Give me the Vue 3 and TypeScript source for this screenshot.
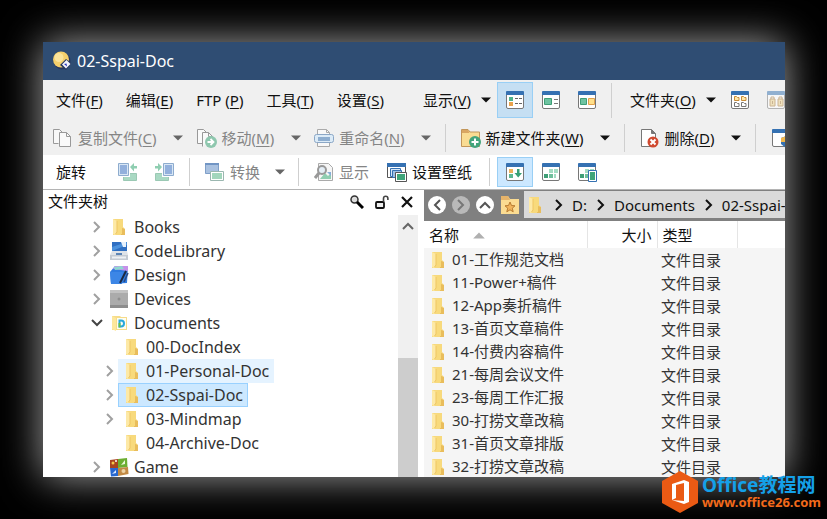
<script setup lang="ts">
interface Tool {
  kind: 'button' | 'caret' | 'sep'
  icon?: string
  text?: string
  hotkey?: string
  title?: string
  off?: boolean
}

interface TreeNode {
  name: string
  icon: string
  level: number
  arrow: 'closed' | 'open' | 'none'
  state?: 'hover' | 'selected'
}

const menus = [
  { text: '文件', hotkey: 'F' },
  { text: '编辑', hotkey: 'E' },
  { text: 'FTP ', hotkey: 'P' },
  { text: '工具', hotkey: 'T' },
  { text: '设置', hotkey: 'S' },
]

const fileTools: Tool[] = [
  { kind: 'button', icon: 'copy', text: '复制文件', hotkey: 'C', off: true },
  { kind: 'caret', title: '复制选项', off: true },
  { kind: 'button', icon: 'move', text: '移动', hotkey: 'M', off: true },
  { kind: 'caret', title: '移动选项', off: true },
  { kind: 'button', icon: 'rename', text: '重命名', hotkey: 'N', off: true },
  { kind: 'caret', title: '重命名选项', off: true },
  { kind: 'sep' },
  { kind: 'button', icon: 'new-folder', text: '新建文件夹', hotkey: 'W' },
  { kind: 'caret', title: '新建选项' },
  { kind: 'sep' },
  { kind: 'button', icon: 'delete', text: '删除', hotkey: 'D' },
  { kind: 'caret', title: '删除选项' },
  { kind: 'sep' },
  { kind: 'button', icon: 'admin', title: '管理员' },
]

const tree: TreeNode[] = [
  { name: 'Books', icon: 'folder', level: 0, arrow: 'closed' },
  { name: 'CodeLibrary', icon: 'code', level: 0, arrow: 'closed' },
  { name: 'Design', icon: 'design', level: 0, arrow: 'closed' },
  { name: 'Devices', icon: 'device', level: 0, arrow: 'closed' },
  { name: 'Documents', icon: 'docs', level: 0, arrow: 'open' },
  { name: '00-DocIndex', icon: 'folder', level: 1, arrow: 'none' },
  { name: '01-Personal-Doc', icon: 'folder', level: 1, arrow: 'closed', state: 'hover' },
  { name: '02-Sspai-Doc', icon: 'folder', level: 1, arrow: 'closed', state: 'selected' },
  { name: '03-Mindmap', icon: 'folder', level: 1, arrow: 'closed' },
  { name: '04-Archive-Doc', icon: 'folder', level: 1, arrow: 'none' },
  { name: 'Game', icon: 'game', level: 0, arrow: 'closed' },
]

const crumbs = ['D:', 'Documents', '02-Sspai-Doc']

const files = [
  '01-工作规范文档',
  '11-Power+稿件',
  '12-App奏折稿件',
  '13-首页文章稿件',
  '14-付费内容稿件',
  '21-每周会议文件',
  '23-每周工作汇报',
  '30-打捞文章改稿',
  '31-首页文章排版',
  '32-打捞文章改稿',
]
</script>

<template>
  <svg class="sprite" aria-hidden="true">
    <symbol id="caret" viewBox="0 0 10 6"><path d="M0 .5h10L5 5.500z" fill="currentColor" /></symbol>
    <symbol id="chevron" viewBox="0 0 10 12"><path d="M2 1l5 5-5 5" fill="none" stroke="currentColor" stroke-width="2" /></symbol>
    <symbol id="chevron-open" viewBox="0 0 12 10"><path d="M1 2l5 5 5-5" fill="none" stroke="currentColor" stroke-width="2" /></symbol>
    <symbol id="frame" viewBox="0 0 20 20">
      <rect x="1.500" y="1.500" width="17" height="17" rx="1.500" fill="#fff" stroke="#777" />
      <path d="M1 5V2a1 1 0 0 1 1-1h16a1 1 0 0 1 1 1v3z" fill="#3571b2" />
    </symbol>
    <symbol id="v-details" viewBox="0 0 20 20">
      <use href="#frame" width="20" height="20" />
      <path d="M4 7h4v4H4z" fill="#4fb38c" /><path d="M4 12h4v4H4z" fill="#e9a24c" />
      <path d="M10 8.500h3m1 0h3M10 13.500h3m1 0h3" stroke="#666" />
    </symbol>
    <symbol id="v-list" viewBox="0 0 20 20">
      <use href="#frame" width="20" height="20" />
      <path d="M3.500 8.500h7v6h-7z" fill="#6fc3a1" stroke="#3f9f77" /><path d="M13 9.500h4m-4 4h4" stroke="#777" />
    </symbol>
    <symbol id="v-dual" viewBox="0 0 20 20">
      <use href="#frame" width="20" height="20" />
      <path d="M3.500 8.500h6v6h-6z" fill="#6fc3a1" stroke="#3f9f77" /><path d="M11.500 8.500h6v6h-6z" fill="#ffe08a" stroke="#e0a04c" />
    </symbol>
    <symbol id="f-grid" viewBox="0 0 20 20">
      <use href="#frame" width="20" height="20" />
      <path d="M4.500 6.500h2l1 1h1.500v3H4.500zM11.500 6.500h2l1 1H16v3h-4.500z" fill="#ffe7a8" stroke="#c78b38" />
      <path d="M4.500 12.500h2l1 1h1.500v3H4.500zM11.500 12.500h2l1 1H16v3h-4.500z" fill="#fff" stroke="#777" />
    </symbol>
    <symbol id="f-lock" viewBox="0 0 20 20">
      <g opacity=".5">
        <use href="#frame" width="20" height="20" />
        <path d="M4 9h5v7H4zM12 9h5v7h-5z" fill="#efd38b" stroke="#a87a3a" /><path d="M5 9V7h3v2M13 9V7h3v2M6.500 11v3m8-3v3" fill="none" stroke="#a87a3a" />
      </g>
    </symbol>
    <symbol id="copy" viewBox="0 0 20 20">
      <path d="M5.500 15.500h-5v-14h6l3 3" fill="#f8f8f8" stroke="#999" />
      <path d="M6.500 4.500h7l4 4v10h-11z" fill="#fafafa" stroke="#999" /><path d="M13.500 4.500v4h4" fill="none" stroke="#999" />
    </symbol>
    <symbol id="move" viewBox="0 0 20 20">
      <path d="M5 15.500H.5v-14h6l3 3M5.500 18.500v-14h6l4 4v2" fill="#fafafa" stroke="#999" /><path d="M11.500 4.500v4h4" fill="none" stroke="#999" />
      <circle cx="14" cy="14" r="6" fill="#8ec7ae" /><path d="M10.500 14h6m-3-3l3 3-3 3" fill="none" stroke="#fff" stroke-width="1.800" />
    </symbol>
    <symbol id="rename" viewBox="0 0 20 20">
      <path d="M3.500 18.500v-17h9l3 3v14z" fill="#f8f8f8" stroke="#aaa" /><path d="M12.500 1.500v3h3" fill="none" stroke="#aaa" />
      <rect x=".5" y="6.500" width="19" height="8" rx="2" fill="#dcebf7" stroke="#8ba7c6" /><path d="M4 9h12v4H4z" fill="#8eaed0" />
    </symbol>
    <symbol id="new-folder" viewBox="0 0 20 20">
      <path d="M.5 18.500v-17H7l2 2.500h9.500v14.500z" fill="#f9dc93" stroke="#c2965a" /><path d="M1 2h6l1.500 3H1z" fill="#d9a662" />
      <circle cx="14" cy="14" r="6" fill="#43a47c" /><path d="M14 10.500v7M10.500 14h7" stroke="#fff" stroke-width="2" />
    </symbol>
    <symbol id="delete" viewBox="0 0 20 20">
      <path d="M1.500 18.500v-17h10l4 4v13z" fill="#fff" stroke="#777" /><path d="M11.500 1.500v4h4" fill="#777" stroke="#777" />
      <circle cx="13" cy="14" r="5.500" fill="#d0492f" /><path d="M10.500 11.500l5 5m0-5l-5 5" stroke="#fff" stroke-width="2" />
    </symbol>
    <symbol id="admin" viewBox="0 0 20 20">
      <use href="#frame" width="20" height="20" />
      <path d="M10 10l5-2 5 2v4l-5 6-5-4z" fill="#3571b2" /><path d="M15 8v6h-5v-4zM15 14h5l-5 6z" fill="#f0b64b" />
    </symbol>
    <symbol id="rot-l" viewBox="0 0 20 20">
      <path d="M5.500 11.500h13v7h-13z" fill="#a9d9c3" stroke="#9bc9b4" /><path d="M0 0h12v15H0z" fill="#fff" /><path d="M.5 1.500h10v12H.5z" fill="#d9e7f5" stroke="#8eacce" /><path d="M2 3h7v9H2z" fill="#92b0dc" />
      <path d="M12 5l4-4v3h3v2.500h-3v3z" fill="#8fceb1" />
    </symbol>
    <symbol id="rot-r" viewBox="0 0 20 20">
      <path d="M1.500 11.500h13v7h-13z" fill="#a9d9c3" stroke="#9bc9b4" /><path d="M8 0h12v15H8z" fill="#fff" /><path d="M9.500 1.500h10v12h-10z" fill="#d9e7f5" stroke="#8eacce" /><path d="M11 3h7v9h-7z" fill="#92b0dc" />
      <path d="M8 5L4 1v3H1v2.500h3v3z" fill="#8fceb1" />
    </symbol>
    <symbol id="convert" viewBox="0 0 20 20">
      <path d="M.5 1.500h13v10H.5z" fill="#a9c1e0" stroke="#7f9fc8" /><path d="M0 1h14v2H0z" fill="#7195c4" />
      <path d="M5.500 9.500h13v9h-13z" fill="#fff" stroke="#9bb7b0" /><path d="M7 11h10v6H7z" fill="#a2d6bc" />
    </symbol>
    <symbol id="preview" viewBox="0 0 20 20">
      <path d="M4.500 18.500v-17h10l4 4v13z" fill="#f6f6f6" stroke="#aaa" /><path d="M6 17l5-6 3 3 3-3v6z" fill="#8fceb1" /><path d="M13 10h4v4z" fill="#87add8" />
      <circle cx="8" cy="8" r="4" fill="#e4eef6" stroke="#999" stroke-width="2" /><path d="M5 11l-4 5" stroke="#999" stroke-width="3" />
    </symbol>
    <symbol id="wallpaper" viewBox="0 0 20 20">
      <path d="M.5 1.500h18v14H.5z" fill="#fff" stroke="#555" /><path d="M0 1h19v4H0z" fill="#3571b2" />
      <path d="M3.500 6.500h10v8h-10z" fill="#d7e8f8" stroke="#3571b2" /><path d="M5.500 8.500h9v7h-9z" fill="#9dc1e6" stroke="#3571b2" />
      <path d="M8.500 10.500h11v9h-11z" fill="#fff" stroke="#555" /><path d="M10 12h8v6h-8z" fill="#3fa57a" />
    </symbol>
    <symbol id="s-down" viewBox="0 0 20 20">
      <use href="#frame" width="20" height="20" />
      <path d="M4 7h4v4H4z" fill="#efb25a" /><path d="M4 12h4v4H4z" fill="#5cb892" />
      <path d="M12 7h2.500v4H17l-3.800 4.500L9.500 11H12z" fill="#38a076" />
    </symbol>
    <symbol id="cells" viewBox="0 0 20 20">
      <use href="#frame" width="20" height="20" />
      <path d="M8 7h4v4H8zM13 7h4v4h-4z" fill="#a4dcc3" /><path d="M3 12h4v4H3z" fill="#3f9f77" /><path d="M8 12h4v4H8z" fill="#6fbf9c" /><path d="M13 12h2v4h-2z" fill="#a4dcc3" />
    </symbol>
    <symbol id="cells-sel" viewBox="0 0 20 20">
      <use href="#cells" width="20" height="20" />
      <path d="M11.500 8.500h8v11h-8z" fill="#fff" stroke="#3571b2" /><path d="M13 10h5v8h-5z" fill="#3fa57a" />
    </symbol>
    <symbol id="folder" viewBox="0 0 20 20">
      <path d="M4 2h10v8l2 2v6H4z" fill="#f7d97d" /><path d="M13 11l3 1v6h-4z" fill="#e9bd5c" /><path d="M8 3h5v14H8z" fill="#f8da7c" /><path d="M4 2l4 2v11l-2 3-2-1z" fill="#fde9a6" /><path d="M8 4v11l-1.500 2" fill="none" stroke="#eec563" />
    </symbol>
    <symbol id="docs" viewBox="0 0 20 20">
      <path d="M3 3h8l1 1h6v13H3z" fill="#f6dc8a" /><path d="M8 5h9v11H8z" fill="#fffdf0" /><path d="M3 3l4 2v13l-4-2z" fill="#fde79c" />
      <path d="M10.500 7.500H12a3 3 0 0 1 0 6h-1.500z" fill="none" stroke="#29a9dc" stroke-width="2" /><path d="M10.500 10v4.500" stroke="#6cc04a" stroke-width="2" />
    </symbol>
    <symbol id="code" viewBox="0 0 20 20">
      <path d="M3 1h15v11H3z" fill="#2f6fc2" /><path d="M3 6L18 1v3L3 10z" fill="#4c92dd" /><path d="M12 1h5v5h-3z" fill="#e7f2fd" /><path d="M1 14l2-4h15l1 4v5H1z" fill="#dfe3e8" /><path d="M1 14h18v5H1z" fill="#c4cad2" /><path d="M7 12h6v2H7z" fill="#5c84b5" />
      <path d="M3 16.500h14" stroke="#eef1f4" stroke-width="2" />
    </symbol>
    <symbol id="design" viewBox="0 0 20 20">
      <path d="M1 7L6 1h13l-1 17-16 1z" fill="#2f7be0" /><path d="M4 4l2-3h13v5z" fill="#c690ea" /><path d="M5 2l8-1 2 3-9 1z" fill="#8fd8d0" /><path d="M1 7h13l-1 12H2z" fill="#3c86e6" />
      <path d="M17 6l-6 12" stroke="#1c2940" stroke-width="2" /><path d="M19 8l-4 9" stroke="#2b4a80" stroke-width="1.500" />
    </symbol>
    <symbol id="device" viewBox="0 0 20 20">
      <rect x="1" y="1" width="18" height="18" fill="#ababab" /><path d="M1 1h18v3H1z" fill="#c2c2c2" /><path d="M1 16h18v3H1z" fill="#8d8d8d" /><circle cx="10" cy="10" r="1.500" fill="#8f8f8f" />
    </symbol>
    <symbol id="game" viewBox="0 0 20 20">
      <path d="M1 3l8-1v9H1z" fill="#a8431f" /><path d="M9 2l9-1 .5 9-9.500 1z" fill="#6cae32" /><path d="M1 11h8v8l-7 .5z" fill="#2868d0" /><path d="M9 11l10-1 .5 7-10.500 2z" fill="#c28a45" />
      <circle cx="4" cy="6" r="1.500" fill="#f2c74a" /><circle cx="7" cy="4" r="1" fill="#fff" /><path d="M12 8l4-5v4z" fill="#eaf7d8" /><path d="M3 17l4-4v3z" fill="#dfeaff" /><circle cx="14.500" cy="14" r="2" fill="#ecd2a4" />
    </symbol>
    <symbol id="fav" viewBox="0 0 20 20">
      <path d="M1 19V1h7l2 3h9v15z" fill="#fbdc92" /><path d="M1 1h7l2 4H1z" fill="#e5b36a" /><path d="M10 7l1.500 3.500 3.500.3-2.700 2.400.9 3.600-3.200-2-3.200 2 .9-3.600L5 10.800l3.500-.3z" fill="#f0b45c" stroke="#b87b30" />
    </symbol>
    <symbol id="search" viewBox="0 0 14 14">
      <circle cx="4.500" cy="4.500" r="3.500" fill="#ddd" stroke="#333" stroke-width="1.500" /><path d="M7 7l6 6" stroke="#000" stroke-width="3" />
    </symbol>
    <symbol id="unlock" viewBox="0 0 14 14">
      <rect x="1" y="7" width="8" height="6" rx="1" fill="#eee" stroke="#111" stroke-width="1.800" /><path d="M8.500 7V3.500a2.200 2.200 0 0 1 4.400 0V5" fill="none" stroke="#444" stroke-width="1.600" />
    </symbol>
    <symbol id="close" viewBox="0 0 14 14"><path d="M2 2l10 10M12 2L2 12" stroke="#111" stroke-width="2.200" /></symbol>
    <symbol id="moon" viewBox="0 0 20 20">
      <circle cx="10" cy="10" r="8.500" fill="#26365f" />
      <circle cx="9" cy="8.500" r="8" fill="#f5d06c" /><circle cx="7" cy="6.500" r="4.500" fill="#fbe49b" />
      <path d="M8 14l6-6 4 3 1 2-5 6z" fill="#26365f" />
      <path d="M10 13.500l4.500-4.500 4 4-4.500 4.500z" fill="#f4f4fb" /><path d="M12 13l2.500-.5.5 3z" fill="#2a36b8" />
    </symbol>
  </svg>

  <div class="desktop">
    <main class="window">
      <header class="titlebar">
        <svg class="app-icon"><use href="#moon" /></svg>
        <h1>02-Sspai-Doc</h1>
      </header>

      <nav class="row menubar" aria-label="菜单">
        <div class="menus">
          <button v-for="m in menus" :key="m.hotkey" type="button">{{ m.text }}(<u>{{ m.hotkey }}</u>)</button>
        </div>
        <button type="button" class="view">显示(<u>V</u>)</button>
        <button type="button" class="caret narrow" aria-label="显示选项"><svg><use href="#caret" /></svg></button>
        <button type="button" class="square active" aria-label="详细信息"><svg class="icon"><use href="#v-details" /></svg></button>
        <button type="button" class="square" aria-label="列表"><svg class="icon"><use href="#v-list" /></svg></button>
        <button type="button" class="square" aria-label="双栏"><svg class="icon"><use href="#v-dual" /></svg></button>
        <span class="sep tight"></span>
        <button type="button">文件夹(<u>O</u>)</button>
        <button type="button" class="caret narrow" aria-label="文件夹选项"><svg><use href="#caret" /></svg></button>
        <button type="button" class="square" aria-label="文件夹格式"><svg class="icon"><use href="#f-grid" /></svg></button>
        <button type="button" class="square" aria-label="锁定格式"><svg class="icon"><use href="#f-lock" /></svg></button>
      </nav>

      <div class="row filebar">
        <template v-for="(t, i) in fileTools" :key="i">
          <span v-if="t.kind === 'sep'" class="sep"></span>
          <button v-else-if="t.kind === 'caret'" type="button" class="caret" :class="{ off: t.off }" :aria-label="t.title">
            <svg><use href="#caret" /></svg>
          </button>
          <button v-else type="button" class="tool" :class="{ off: t.off }" :aria-label="t.title">
            <svg class="icon"><use :href="'#' + t.icon" /></svg>
            <span v-if="t.text">{{ t.text }}(<u>{{ t.hotkey }}</u>)</span>
          </button>
        </template>
      </div>

      <div class="row imagebar">
        <span class="caption">旋转</span>
        <button type="button" class="square" aria-label="向左旋转"><svg class="icon"><use href="#rot-l" /></svg></button>
        <button type="button" class="square" aria-label="向右旋转"><svg class="icon"><use href="#rot-r" /></svg></button>
        <span class="sep"></span>
        <button type="button" class="tool off"><svg class="icon"><use href="#convert" /></svg><span>转换</span></button>
        <button type="button" class="caret off" aria-label="转换选项"><svg><use href="#caret" /></svg></button>
        <span class="sep"></span>
        <button type="button" class="tool off"><svg class="icon"><use href="#preview" /></svg><span>显示</span></button>
        <button type="button" class="tool wall"><svg class="icon"><use href="#wallpaper" /></svg><span>设置壁纸</span></button>
        <span class="sep snug"></span>
        <button type="button" class="square active" aria-label="排序"><svg class="icon"><use href="#s-down" /></svg></button>
        <button type="button" class="square" aria-label="选择"><svg class="icon"><use href="#cells" /></svg></button>
        <button type="button" class="square" aria-label="复制选择"><svg class="icon"><use href="#cells-sel" /></svg></button>
      </div>

      <div class="panes">
        <section class="side">
          <header class="side-head">
            <h2>文件夹树</h2>
            <button type="button" aria-label="搜索"><svg><use href="#search" /></svg></button>
            <button type="button" aria-label="解锁"><svg><use href="#unlock" /></svg></button>
            <button type="button" aria-label="关闭"><svg><use href="#close" /></svg></button>
          </header>
          <div class="side-body">
            <ul class="tree">
              <li v-for="n in tree" :key="n.name" :class="{ child: n.level === 1 }">
                <span class="twisty" :class="n.arrow">
                  <svg v-if="n.arrow !== 'none'"><use :href="n.arrow === 'open' ? '#chevron-open' : '#chevron'" /></svg>
                </span>
                <button type="button" class="node" :class="n.state">
                  <svg class="icon"><use :href="'#' + n.icon" /></svg>{{ n.name }}
                </button>
              </li>
            </ul>
            <div class="scroll">
              <svg><use href="#chevron-open" /></svg>
              <span class="thumb"></span>
            </div>
          </div>
        </section>

        <section class="content">
          <nav class="location" aria-label="位置">
            <button type="button" class="round back" aria-label="后退"><svg><use href="#chevron" /></svg></button>
            <button type="button" class="round dim" aria-label="前进"><svg><use href="#chevron" /></svg></button>
            <button type="button" class="round up" aria-label="上级"><svg><use href="#chevron" /></svg></button>
            <button type="button" class="fav" aria-label="收藏夹"><svg class="icon"><use href="#fav" /></svg></button>
            <div class="path">
              <svg class="icon"><use href="#folder" /></svg>
              <template v-for="c in crumbs" :key="c">
                <svg class="step"><use href="#chevron" /></svg>
                <a href="#">{{ c }}</a>
              </template>
            </div>
          </nav>
          <table>
            <colgroup><col class="c-name" /><col class="c-size" /><col class="c-type" /><col /></colgroup>
            <thead>
              <tr><th>名称<svg class="sort"><use href="#caret" /></svg></th><th class="size">大小</th><th class="type">类型</th><th></th></tr>
            </thead>
            <tbody>
              <tr v-for="f in files" :key="f">
                <td><svg class="icon"><use href="#folder" /></svg>{{ f }}</td>
                <td></td>
                <td class="type">文件目录</td>
                <td></td>
              </tr>
            </tbody>
          </table>
        </section>
      </div>
    </main>

    <a class="watermark" href="#">
      <svg viewBox="0 0 36 42">
        <path d="M18 0l18 10v22L18 42 0 32V10z" fill="#ea5a14" />
        <path d="M10 13l12-4 5 2v20l-5 2-12-4 12 1V12l-8 2v13l-4 2z" fill="#fff" />
      </svg>
      <span class="brand"><b>Office教程网</b><small>www.office26.com</small></span>
    </a>
  </div>
</template>

<style>
body {
  background: #000;
}
</style>

<style scoped>
.sprite {
  display: none;
}
.desktop {
  position: relative;
  box-sizing: border-box;
  height: 100vh;
  padding: 42px 42px 42px 43px;
  overflow: hidden;
  background: #000;
  color: #111;
  font: 15px/20px 'Noto Sans', 'Noto Sans CJK SC', sans-serif;
}
.window {
  display: flex;
  flex-direction: column;
  height: 100%;
  overflow: hidden;
  background: #fff;
  box-shadow: 0 0 38px #a8a8a8;
}
button {
  display: flex;
  flex: none;
  align-items: center;
  padding: 0;
  border: 0;
  background: none;
  color: inherit;
  font: inherit;
  white-space: nowrap;
}
h1,
h2 {
  margin: 0;
  font-size: 15px;
  font-weight: 400;
}
h1 {
  font-size: 16px;
}
u {
  text-underline-offset: 2px;
}
.icon {
  flex: none;
  width: 20px;
  height: 20px;
}
.titlebar {
  display: flex;
  flex: none;
  align-items: center;
  gap: 5px;
  height: 38px;
  padding-left: 9px;
  background: #2f4d73;
  color: #fff;
}
.app-icon {
  width: 20px;
  height: 20px;
}
.row {
  display: flex;
  flex: none;
  align-items: center;
  overflow: hidden;
  background: #f0f0f0;
}
.menubar {
  height: 40px;
  padding-left: 13px;
}
.filebar {
  height: 35px;
  padding-left: 10px;
}
.imagebar {
  height: 34px;
  padding-left: 13px;
  border-bottom: 1px solid #b4b4b4;
  background: #fff;
}
.menus {
  display: flex;
  flex: none;
  gap: 23px;
}
.view {
  margin-left: 39px;
}
.caret {
  justify-content: center;
  width: 37px;
  margin-left: 3px;
}
.imagebar .caret {
  margin-left: 1px;
}
.caret.narrow {
  width: 22px;
  margin-left: 4px;
}
.caret svg {
  width: 10px;
  height: 6px;
}
.square {
  box-sizing: border-box;
  justify-content: center;
  width: 36px;
  height: 36px;
  border: 1px solid transparent;
}
.imagebar .square {
  height: 30px;
}
.square.active {
  border-color: #99cff5;
  background: #c5dff3;
}
.imagebar .square.active {
  background: #cce8ff;
}
.tool {
  gap: 5px;
}
.off {
  color: #858585;
}
.caret.off {
  color: #666;
}
.wall {
  margin-left: 18px;
}
.sep {
  flex: none;
  width: 1px;
  height: 28px;
  margin-right: 15px;
  background: #cfcfcf;
}
.sep.tight {
  height: 35px;
  margin: 0 18px 0 6px;
}
.sep.snug {
  margin: 0 7px 0 17px;
}
.caption {
  flex: none;
  width: 54px;
}
.square + .sep:not(.tight) {
  margin-left: 7px;
}
.panes {
  display: flex;
  flex: 1;
  min-height: 0;
}
.side {
  display: flex;
  flex: none;
  flex-direction: column;
  width: 381px;
  min-height: 0;
}
.side-head {
  display: flex;
  flex: none;
  height: 25px;
  padding: 0 5px;
}
.side-head h2 {
  flex: 1;
  line-height: 22px;
}
.side-head button {
  justify-content: center;
  width: 25px;
  height: 23px;
}
.side-head svg {
  width: 14px;
  height: 14px;
}
.side-body {
  display: flex;
  flex: 1;
  justify-content: space-between;
  min-height: 0;
  padding-right: 6px;
  overflow: hidden;
}
.tree {
  margin: 0;
  padding: 0 0 0 46px;
  list-style: none;
  color: #333;
  font-size: 16px;
}
.tree li {
  display: flex;
  height: 24px;
}
.tree .child {
  padding-left: 13px;
}
.twisty {
  display: flex;
  align-items: center;
  justify-content: center;
  width: 16px;
  color: #a0a0a0;
}
.twisty svg {
  width: 10px;
  height: 12px;
}
.twisty.open {
  color: #444;
}
.twisty.open svg {
  width: 12px;
  height: 10px;
}
.node {
  gap: 5px;
  padding: 0 5px 0 4px;
}
.child .node {
  gap: 4px;
}
.node.hover {
  background: #e5f3ff;
}
.node.selected {
  background: #cce8ff;
  outline: 1px solid #99d1ff;
  outline-offset: -1px;
}
.scroll {
  display: flex;
  flex-direction: column;
  align-items: center;
  width: 20px;
  background: #f0f0f0;
  color: #666;
}
.scroll svg {
  width: 12px;
  height: 10px;
  margin: 6px 0;
  transform: rotate(180deg);
}
.thumb {
  width: 100%;
  flex: 1;
  margin-top: 121px;
  background: #cdcdcd;
}
.content {
  flex: 1;
  min-width: 0;
  overflow: hidden;
  background: #f5f5f5;
}
.location {
  display: flex;
  align-items: center;
  box-sizing: border-box;
  height: 31px;
  padding: 0 0 2px 4px;
  background: #808080;
}
.round {
  justify-content: center;
  width: 18px;
  height: 18px;
  margin-right: 6px;
  border-radius: 50%;
  background: #fff;
  color: #555;
}
.round svg {
  width: 10px;
  height: 12px;
}
.round.back svg {
  transform: rotate(180deg);
}
.round.up svg {
  transform: rotate(-90deg);
}
.round.dim {
  background: #b9b9b9;
  color: #777;
}
.fav {
  margin-right: 4px;
}
.path {
  display: flex;
  flex: 1;
  align-items: center;
  min-width: 0;
  height: 27px;
  padding-left: 1px;
  overflow: hidden;
  background: #dadada;
  white-space: nowrap;
}
.path a {
  color: #111;
  text-decoration: none;
}
.step {
  flex: none;
  width: 10px;
  height: 12px;
  margin: 0 8px 0 9px;
}
table {
  width: 100%;
  border-collapse: collapse;
  table-layout: fixed;
  color: #333;
  white-space: nowrap;
}
.c-name {
  width: 163px;
}
.c-size {
  width: 70px;
}
.c-type {
  width: 80px;
}
th {
  height: 27px;
  padding: 0 5px;
  border-right: 1px solid #e5e5e5;
  background: #fff;
  color: #111;
  font-weight: 400;
  text-align: left;
}
th:last-child {
  border: 0;
}
th.size {
  text-align: right;
}
.sort {
  width: 12px;
  height: 7px;
  margin: 0 0 2px 14px;
  color: #b0b0b0;
  transform: rotate(180deg);
}
td {
  height: 23px;
  padding: 0 4px;
}
td .icon {
  margin-right: 4px;
  vertical-align: middle;
}
.watermark {
  position: absolute;
  right: 6px;
  bottom: 6px;
  display: flex;
  gap: 4px;
  color: #f26a1b;
  text-decoration: none;
}
.watermark svg {
  width: 36px;
  height: 42px;
}
.brand {
  display: flex;
  flex-direction: column;
  padding-top: 4px;
}
.brand b {
  color: #14a0e8;
  font-size: 19px;
  line-height: 20px;
}
.brand small {
  font-size: 13px;
  font-weight: 700;
  line-height: 14px;
}
</style>
